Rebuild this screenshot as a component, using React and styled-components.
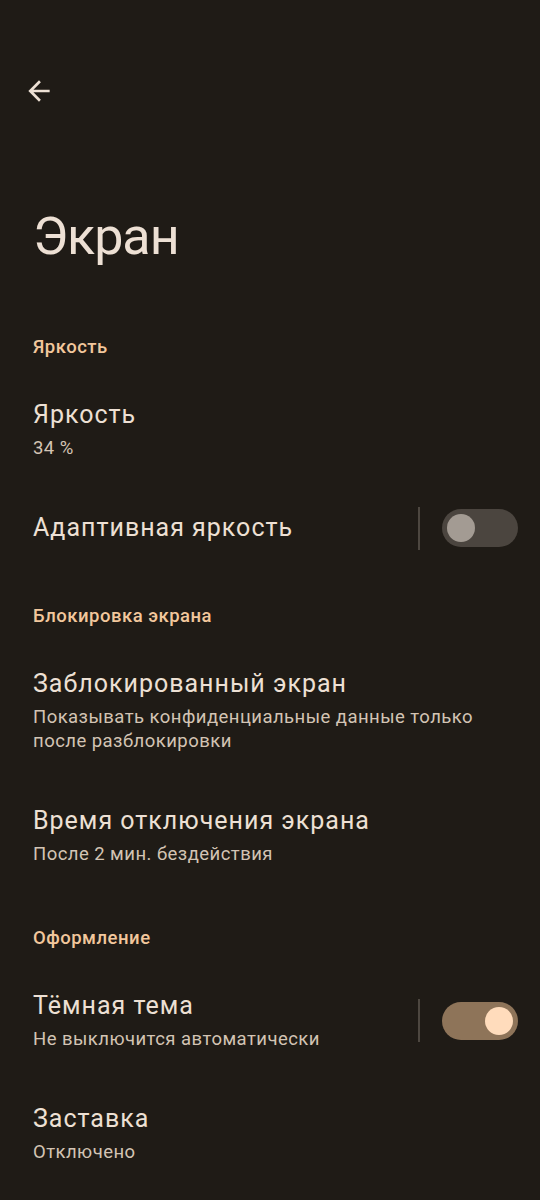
import React from 'react';
import styled, { createGlobalStyle } from 'styled-components';

const GlobalStyle = createGlobalStyle`
    html, body {
        margin: 0;
        padding: 0;
        background: #1f1b16;
    }
    body {
        font-family: Roboto, "Noto Sans", sans-serif;
        -webkit-font-smoothing: antialiased;
    }
`

const sections = [
    {
        title: 'Яркость',
        items: [
            { title: 'Яркость', summary: '34 %' },
            { title: 'Адаптивная яркость', toggle: false },
        ],
    },
    {
        title: 'Блокировка экрана',
        items: [
            { title: 'Заблокированный экран', summary: 'Показывать конфиденциальные данные только после разблокировки' },
            { title: 'Время отключения экрана', summary: 'После 2 мин. бездействия' },
        ],
    },
    {
        title: 'Оформление',
        items: [
            { title: 'Тёмная тема', summary: 'Не выключится автоматически', toggle: true },
            { title: 'Заставка', summary: 'Отключено' },
        ],
    },
]

const BackIcon = () => (
    <svg width="32" height="32" viewBox="0 0 24 24" fill="#ede0d4">
        <path d="M20 11H7.83l5.59-5.59L12 4l-8 8 8 8 1.41-1.41L7.83 13H20v-2z" />
    </svg>
)

const Toggle = ({ on }) => (
    <Track on={on ? 1 : 0}>
        <Thumb on={on ? 1 : 0} />
    </Track>
)

const App = () => {
    return (
        <Page>
            <GlobalStyle />
            <TopBar>
                <BackButton aria-label="Назад">
                    <BackIcon />
                </BackButton>
            </TopBar>
            <Title>Экран</Title>
            {sections.map(section => (
                <section key={section.title}>
                    <SectionHeader>{section.title}</SectionHeader>
                    {section.items.map(item => (
                        <Row key={item.title}>
                            <TextCol>
                                <ItemTitle>{item.title}</ItemTitle>
                                {item.summary && <Summary>{item.summary}</Summary>}
                            </TextCol>
                            {item.toggle !== undefined && (
                                <SwitchArea>
                                    <Divider />
                                    <Toggle on={item.toggle} />
                                </SwitchArea>
                            )}
                        </Row>
                    ))}
                </section>
            ))}
        </Page>
    )
}

export default App;

const Page = styled.div`
    width: 540px;
    min-height: 1200px;
    background: #1f1b16;
    color: #ede0d4;
    padding: 0 22px 0 33px;
    box-sizing: border-box;
    overflow: hidden;
`
const TopBar = styled.div`
    display: flex;
    align-items: center;
    height: 48px;
    margin-top: 67px;
    margin-left: -10px;
`
const BackButton = styled.button`
    display: flex;
    align-items: center;
    justify-content: center;
    padding: 0;
    border: none;
    background: none;
    width: 32px;
    height: 32px;
`
const Title = styled.h1`
    margin: 90px 0 32px;
    font-size: 52px;
    line-height: 64px;
    font-weight: 400;
    letter-spacing: -1px;
    color: #ede0d4;
`
const SectionHeader = styled.h2`
    margin: 0;
    padding: 34px 0 14px;
    font-size: 18.5px;
    line-height: 24px;
    font-weight: 500;
    letter-spacing: 0.5px;
    color: #f2c79c;
`
const Row = styled.div`
    display: flex;
    align-items: center;
    padding: 26px 0;
`
const TextCol = styled.div`
    flex: 1;
    min-width: 0;
    padding-right: 16px;
`
const ItemTitle = styled.div`
    font-size: 25px;
    line-height: 32px;
    letter-spacing: 1px;
    color: #ede0d4;
`
const Summary = styled.div`
    margin-top: 5px;
    font-size: 18.5px;
    line-height: 24px;
    letter-spacing: 0.45px;
    color: #d3c4b4;
`
const SwitchArea = styled.div`
    display: flex;
    align-items: center;
    gap: 22px;
    height: 32px;
`
const Divider = styled.div`
    width: 2px;
    height: 43px;
    background: #4d4740;
`
const Track = styled.div`
    width: 76px;
    height: 38px;
    border-radius: 19px;
    background: ${p => p.on ? '#8e7459' : '#4b453f'};
    display: flex;
    align-items: center;
    justify-content: ${p => p.on ? 'flex-end' : 'flex-start'};
    padding: 0 5px;
    box-sizing: border-box;
`
const Thumb = styled.div`
    width: 28px;
    height: 28px;
    border-radius: 50%;
    background: ${p => p.on ? '#ffdcbc' : '#a39b93'};
`
